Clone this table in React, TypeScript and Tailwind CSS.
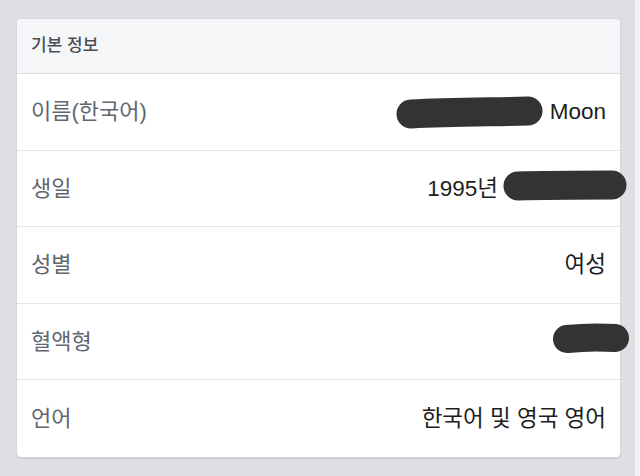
const rows: { label: string; value: string; pad?: string }[] = [
  { label: "이름(한국어)", value: "Moon" },
  { label: "생일", value: "1995년", pad: "pr-[108px]" },
  { label: "성별", value: "여성" },
  { label: "혈액형", value: "" },
  { label: "언어", value: "한국어 및 영국 영어" },
];

export default function App() {
  return (
    <main
      className="relative h-[476px] w-[640px] overflow-hidden bg-[#dddfe2] pt-[18px] pl-4"
      style={{ fontFamily: '"Liberation Sans", "Noto Sans CJK KR", sans-serif' }}
    >
      <div className="absolute right-0 top-0 h-full w-[5px] bg-[#f1f2f4]" />

      <section className="w-[605px] overflow-hidden rounded-[5px] border border-[#d3d6db] bg-white shadow-[0_1px_1px_rgba(0,0,0,0.08)]">
        <header className="flex h-[55px] items-center border-b border-[#dddfe2] bg-[#f5f6f7] px-[14px]">
          <h2 className="text-[17px] font-medium text-[#4b4f56]">기본 정보</h2>
        </header>
        {rows.map((r, i) => (
          <div
            key={r.label}
            className={`flex h-[76.6px] items-center justify-between px-[14px] ${
              i < rows.length - 1 ? "border-b border-[#e4e6e9]" : ""
            }`}
          >
            <span className="text-[22px] text-[#606770]">{r.label}</span>
            <span className={`text-[22.5px] text-[#1c1e21] ${r.pad ?? ""}`}>{r.value}</span>
          </div>
        ))}
      </section>

      {/* marker redactions drawn over the screenshot */}
      <svg
        className="pointer-events-none absolute left-0 top-0"
        width="640"
        height="476"
        viewBox="0 0 640 476"
      >
        <g stroke="#333333" strokeLinecap="round" fill="none">
          <path d="M411 114 C 450 112, 490 112, 528 111" strokeWidth="29" />
          <path d="M518 186 C 550 185, 585 185, 612 185" strokeWidth="29" />
          <path d="M567 339 C 585 337, 600 337, 615 338" strokeWidth="28" />
        </g>
      </svg>
    </main>
  );
}
